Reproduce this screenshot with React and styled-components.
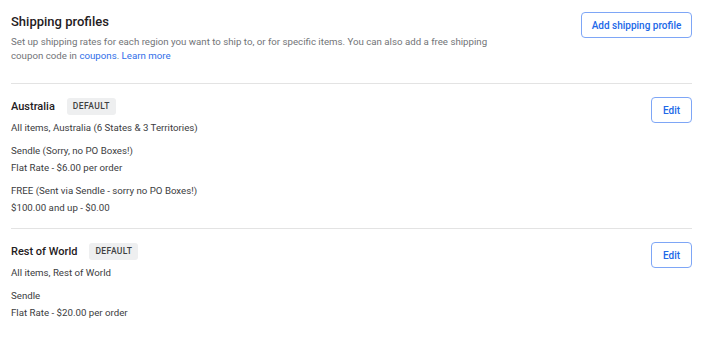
import React from "react";
import styled, { createGlobalStyle } from "styled-components";

const GlobalStyle = createGlobalStyle`
  html, body {
    margin: 0;
    padding: 0;
    background: #ffffff;
  }
  body {
    font-family: Roboto, "Liberation Sans", sans-serif;
    -webkit-font-smoothing: antialiased;
  }
`;

const profiles = [
  {
    name: "Australia",
    scope: "All items, Australia (6 States & 3 Territories)",
    rates: [
      ["Sendle (Sorry, no PO Boxes!)", "Flat Rate - $6.00 per order"],
      ["FREE (Sent via Sendle - sorry no PO Boxes!)", "$100.00 and up - $0.00"],
    ],
  },
  {
    name: "Rest of World",
    scope: "All items, Rest of World",
    rates: [["Sendle", "Flat Rate - $20.00 per order"]],
  },
];

export default function App() {
  return (
    <>
      <GlobalStyle />
      <Page>
        <Header>
          <div>
            <Title>Shipping profiles</Title>
            <Description>
              Set up shipping rates for each region you want to ship to, or for
              specific items. You can also add a free shipping coupon code in{" "}
              <Link href="#">coupons</Link>. <Link href="#">Learn more</Link>
            </Description>
          </div>
          <OutlineButton $wide>Add shipping profile</OutlineButton>
        </Header>
        {profiles.map((p) => (
          <Profile key={p.name}>
            <div>
              <ProfileHead>
                <ProfileName>{p.name}</ProfileName>
                <Badge>Default</Badge>
              </ProfileHead>
              <Line>{p.scope}</Line>
              {p.rates.map((r) => (
                <RateGroup key={r[0]}>
                  <Line>{r[0]}</Line>
                  <Line>{r[1]}</Line>
                </RateGroup>
              ))}
            </div>
            <OutlineButton>Edit</OutlineButton>
          </Profile>
        ))}
      </Page>
    </>
  );
}

const Page = styled.div`
  padding: 0 15px 0 11px;
  width: 681px;
`;

const Header = styled.div`
  display: flex;
  justify-content: space-between;
  align-items: flex-start;
  padding: 12px 0 20px;
`;

const Title = styled.h2`
  margin: 1px 0 0;
  font-size: 13px;
  font-weight: 500;
  line-height: 18px;
  color: #1f2022;
`;

const Description = styled.p`
  margin: 4px 0 0;
  width: 490px;
  font-size: 9.7px;
  line-height: 14px;
  color: #727477;
`;

const Link = styled.a`
  color: #2f6ee9;
  text-decoration: none;
`;

const OutlineButton = styled.button`
  flex: none;
  width: ${({ $wide }) => ($wide ? "111px" : "41px")};
  height: 26px;
  padding: 0;
  border: 1px solid #7ea6f6;
  border-radius: 4px;
  background: #fff;
  color: #2168e8;
  font-family: inherit;
  font-size: 10px;
  font-weight: 500;
  cursor: pointer;
`;

const Profile = styled.div`
  display: flex;
  justify-content: space-between;
  align-items: flex-start;
  border-top: 1px solid #e3e3e3;
  padding: 13px 0 12px;
`;

const ProfileHead = styled.div`
  display: flex;
  align-items: center;
  gap: 12px;
  height: 17px;
  margin: 1px 0 4px;
`;

const ProfileName = styled.span`
  font-size: 11px;
  font-weight: 500;
  color: #1f2022;
`;

const Badge = styled.span`
  padding: 0 6px;
  height: 17px;
  line-height: 17px;
  border-radius: 3px;
  background: #eeeff0;
  color: #3e3f41;
  font-size: 8.5px;
  font-weight: 500;
  letter-spacing: 0.4px;
  text-transform: uppercase;
`;

const Line = styled.div`
  font-size: 9.7px;
  line-height: 17px;
  color: #3b3c3e;
`;

const RateGroup = styled.div`
  margin-top: 6px;
`;
